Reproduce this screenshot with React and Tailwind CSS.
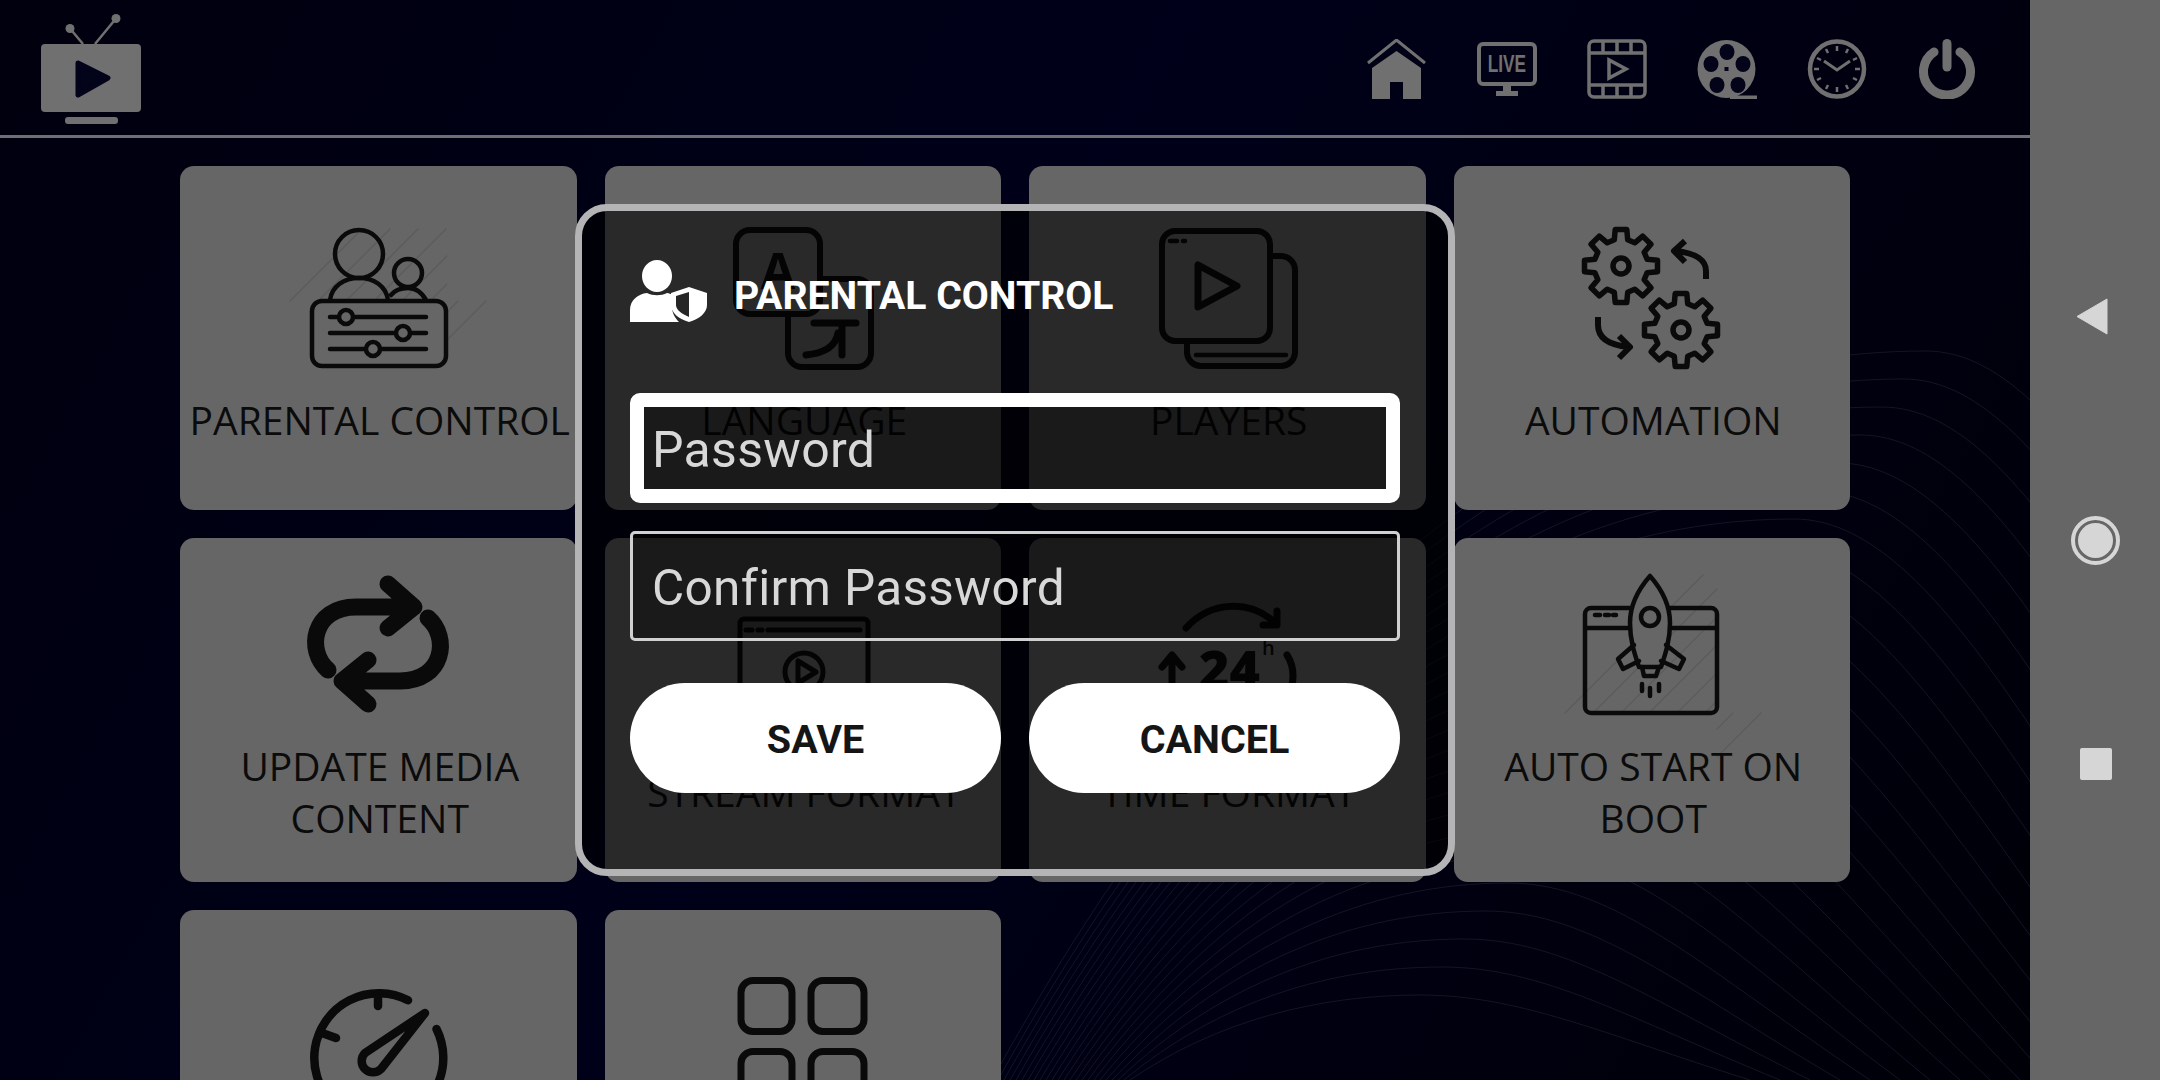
import React from 'react';

const gearPath = (cx, cy, outer, inner, teeth = 8) => {
    const pts = [];
    const step = (Math.PI * 2) / teeth;
    for (let i = 0; i < teeth; i++) {
        const a = i * step - Math.PI / 2;
        const w = step * 0.2;
        [[a - w, outer], [a + w, outer], [a + step * 0.32, inner], [a + step * 0.68, inner]].forEach(([t, r]) => {
            pts.push(`${(cx + Math.cos(t) * r).toFixed(1)} ${(cy + Math.sin(t) * r).toFixed(1)}`);
        });
    }
    return `M${pts.join('L')}Z`;
};

// faint hatching that sits behind two of the card icons
const Hatch = ({ x = 0, y = 0, w = 137, h = 138 }) => (
    <g stroke="#5c5c5c" strokeWidth="1.5">
        {[0, 1, 2, 3, 4, 5, 6, 7].map(i => (
            <line key={i} x1={x + i * 28 - 20} y1={y + h} x2={Math.min(x + w, x + i * 28 + h - 20)} y2={y + h - Math.min(h, w - i * 28 + 20)} />
        ))}
    </g>
);

const IconBox = ({ children }) => (
    <svg viewBox="0 0 140 140" className="w-[140px] h-[140px] shrink-0 overflow-visible" fill="none" stroke="#0a0a0a" strokeWidth="4.5" strokeLinecap="round" strokeLinejoin="round">
        {children}
    </svg>
);

const ParentalIcon = () => (
    <IconBox>
        <Hatch h={72} />
        <ellipse cx="49" cy="25" rx="24" ry="24" />
        <path d="M20 71C22 57 34 49 49 49S76 57 78 71" />
        <ellipse cx="98" cy="44" rx="14" ry="14" />
        <path d="M81 66C85 61 91 59 98 59S111 62 116 71" />
        <rect x="2" y="72" width="134" height="65" rx="10" />
        <path d="M20 88H116M20 104H116M20 120H116" />
        <circle cx="36" cy="88" r="7" fill="#666" />
        <circle cx="93" cy="104" r="7" fill="#666" />
        <circle cx="63" cy="120" r="7" fill="#666" />
    </IconBox>
);

const LanguageIcon = () => (
    <IconBox>
        <rect x="54" y="50" width="83" height="88" rx="14" strokeWidth="6" />
        <rect x="2" y="1" width="84" height="84" rx="14" fill="#666" strokeWidth="6" />
        <text x="44" y="60" textAnchor="middle" fill="#0a0a0a" stroke="none" fontSize="50" fontWeight="700" fontFamily="'Open Sans', sans-serif">A</text>
        <path d="M80 94H122M108 94V126M104 104C102 116 92 124 72 126" strokeWidth="7" />
    </IconBox>
);

const PlayersIcon = () => (
    <IconBox>
        <path d="M111 27H123A14 14 0 0 1 136 41V124A14 14 0 0 1 122 137H42A14 14 0 0 1 28 124V112" strokeWidth="6" />
        <rect x="3" y="2" width="108" height="110" rx="13" strokeWidth="6" />
        <path d="M39 36V78L78 57Z" strokeWidth="7" />
        <path d="M11 12H18M24 12H26M37 126H127" />
    </IconBox>
);

const AutomationIcon = () => (
    <IconBox>
        <path d={gearPath(38, 37, 37, 27)} strokeWidth="5.5" />
        <circle cx="38" cy="37" r="8" strokeWidth="5.5" />
        <path d={gearPath(98, 101, 37, 27)} strokeWidth="5.5" />
        <circle cx="98" cy="101" r="8" strokeWidth="5.5" />
        <path d="M123 50V42C123 32 114 24 92 22M102 12L91 22L102 33" strokeWidth="6" strokeLinecap="butt" />
        <path d="M15 88V96C15 108 24 116 46 118M36 107L47 118L36 129" strokeWidth="6" strokeLinecap="butt" />
    </IconBox>
);

const RefreshIcon = () => (
    <IconBox>
        <g strokeWidth="17">
            <path d="M18 95C-4 76 2 32 46 32H103M78 9L104 32L78 53" />
            <path d="M18 95C-4 76 2 32 46 32H103M78 9L104 32L78 53" transform="rotate(180 68 69)" />
        </g>
    </IconBox>
);

const StreamIcon = () => (
    <IconBox>
        <rect x="6" y="18" width="128" height="104" rx="4" strokeWidth="5" />
        <path d="M12 29H18M24 29H28M34 29H126" strokeWidth="5" />
        <circle cx="70" cy="71" r="19" strokeWidth="5" />
        <path d="M64 60V82L82 71Z" strokeWidth="5" />
    </IconBox>
);

const TimeIcon = () => (
    <IconBox>
        <path d="M27 27C52 -1 92 -1 116 22" strokeWidth="7" />
        <path d="M104 24H118V10" strokeWidth="7" />
        <path d="M13 96V56M3 66L13 54L23 66" strokeWidth="7" />
        <text x="40" y="87" fill="#0a0a0a" stroke="none" fontSize="52" fontWeight="800" fontFamily="'Open Sans', sans-serif">24</text>
        <text x="103" y="54" fill="#0a0a0a" stroke="none" fontSize="20" fontWeight="600" fontFamily="'Open Sans', sans-serif">h</text>
        <path d="M128 54C136 66 136 84 128 96" strokeWidth="7" />
    </IconBox>
);

const RocketIcon = () => (
    <IconBox>
        <Hatch x={2} y={0} w={132} h={138} />
        <path d="M47 33H8A6 6 0 0 0 2 39V132A6 6 0 0 0 8 138H128A6 6 0 0 0 134 132V39A6 6 0 0 0 128 33H87" fill="none" />
        <path d="M3 53H47M87 53H133M12 40H17M22 40H26M30 40H33" />
        <path d="M67 1C52 18 47 34 47 48C47 66 52 80 56 92H78C82 80 87 66 87 48C87 34 82 18 67 1Z" fill="#666" />
        <circle cx="67" cy="42" r="9" />
        <path d="M51 70L35 84L40 94L56 86M83 70L101 84L96 94L78 86" />
        <path d="M59 92L61 101H73L76 92" />
        <path d="M59 109V116M67 113V121M76 109V116" />
    </IconBox>
);

const GaugeIcon = () => (
    <IconBox>
        <g strokeWidth="8.5">
            <path d="M98 27.3A64.5 64.5 0 1 0 126.5 56" />
            <path d="M68 21V33M12 60L26 65" />
            <path d="M115 40L55 80A11 11 0 0 0 71 96Z" />
        </g>
    </IconBox>
);

const GridIcon = () => (
    <IconBox>
        <g strokeWidth="7">
            <rect x="7" y="7.5" width="51" height="51" rx="12" />
            <rect x="77" y="7.5" width="53" height="51" rx="12" />
            <rect x="7" y="78.5" width="51" height="55" rx="12" />
            <rect x="77" y="78.5" width="53" height="55" rx="12" />
        </g>
    </IconBox>
);

const cards = [
    { id: 'parental', label: 'PARENTAL CONTROL', Icon: ParentalIcon },
    { id: 'language', label: 'LANGUAGE', Icon: LanguageIcon },
    { id: 'players', label: 'PLAYERS', Icon: PlayersIcon },
    { id: 'automation', label: 'AUTOMATION', Icon: AutomationIcon },
    { id: 'update', label: 'UPDATE MEDIA CONTENT', Icon: RefreshIcon },
    { id: 'stream', label: 'STREAM FORMAT', Icon: StreamIcon },
    { id: 'time', label: 'TIME FORMAT', Icon: TimeIcon },
    { id: 'boot', label: 'AUTO START ON BOOT', Icon: RocketIcon },
    { id: 'gauge', label: '\u00a0', Icon: GaugeIcon },
    { id: 'grid', label: '\u00a0', Icon: GridIcon },
];

const Card = ({ label, Icon }) => (
    <div className="h-[344px] rounded-[14px] bg-[#666666] flex flex-col items-center justify-center pb-[2px] pl-[3px]">
        <Icon />
        <div className="mt-[25px] w-[390px] text-center font-['Open_Sans',sans-serif] text-[39px] leading-[52px] text-[#0b0b0b]">{label}</div>
    </div>
);

const Waves = () => {
    const lines = Array.from({ length: 24 }, (_, t) => {
        const py = 995 - 28 * t;
        const px = 1420 + 22 * t;
        const fx = 1130 - 6 * t;
        const rx = 1750 + 30 * t;
        return `M${fx} 1080C${fx + (px - fx) * 0.3} ${py + (1080 - py) * 0.3} ${px - (px - fx) * 0.35} ${py} ${px} ${py}C${px + (rx - px) * 0.3} ${py} ${rx - (rx - px) * 0.45} ${py + (1080 - py) * 0.45} ${rx} 1080`;
    });
    return (
        <svg viewBox="0 0 2030 1080" className="absolute inset-0 w-[2030px] h-[1080px]" fill="none" stroke="#141424" strokeWidth="1">
            {lines.map((d, i) => <path key={i} d={d} />)}
        </svg>
    );
};

const Logo = () => (
    <svg viewBox="0 0 100 106" className="w-[100px] h-[106px] overflow-visible">
        <path d="M29 10.5L42 26M75 0.5L54 26" stroke="#707070" strokeWidth="2.5" />
        <circle cx="29" cy="10.5" r="4.5" fill="#707070" />
        <circle cx="75" cy="0.5" r="4.5" fill="#707070" />
        <rect x="0" y="26" width="100" height="68" rx="4" fill="#707070" />
        <path d="M37 45L67 60L37 77Z" fill="#03031a" stroke="#03031a" strokeWidth="5" strokeLinejoin="round" />
        <rect x="24" y="99" width="53" height="7" rx="3" fill="#707070" />
    </svg>
);

const NavIcon = ({ children }) => (
    <svg viewBox="0 0 60 60" className="w-[60px] h-[60px]" fill="none" stroke="#707070" strokeWidth="3.5">
        {children}
    </svg>
);

const reelHoles = [[30, 13], [14, 25], [46, 25], [20, 46], [41, 46]];

const navIcons = [
    <NavIcon key="home">
        <path d="M1 24L29.5 1L58 24" strokeWidth="3" />
        <path d="M5 29L29.5 12L54 29V60H36V43H23V60H5Z" fill="#707070" stroke="none" />
    </NavIcon>,
    <NavIcon key="live">
        <rect x="2" y="5" width="56" height="40" rx="4" strokeWidth="4" />
        <text x="41.6" y="33" transform="scale(0.72 1)" textAnchor="middle" fill="#707070" stroke="none" fontSize="24" fontWeight="700" fontFamily="'Liberation Sans', sans-serif">LIVE</text>
        <path d="M26 46V52H19V57H41V52H34V46Z" fill="#707070" stroke="none" />
    </NavIcon>,
    <NavIcon key="film">
        <rect x="2" y="2" width="56" height="56" rx="5" strokeWidth="3.5" />
        <path d="M2 14H58M2 46H58M16 2V14M30 2V14M44 2V14M16 46V58M30 46V58M44 46V58" />
        <path d="M22 21V39L39 30Z" strokeWidth="3.5" />
    </NavIcon>,
    <NavIcon key="reel">
        <path d="M33 58.5H60" strokeWidth="4" />
        <circle cx="29.5" cy="30" r="29" fill="#707070" stroke="none" />
        {reelHoles.map(([x, y]) => <ellipse key={x} cx={x} cy={y} rx="7.5" ry="8" fill="#03031a" stroke="none" />)}
        <rect x="27.5" y="28" width="4" height="4" fill="#03031a" stroke="none" />
    </NavIcon>,
    <NavIcon key="clock">
        <ellipse cx="30" cy="30" rx="27" ry="27.5" strokeWidth="4.5" />
        <path d="M30 7V12M30 48V53M7 30H12M48 30H53M19 10L21 14M41 10L39 14M10 19L14 21M50 19L46 21M10 41L14 39M50 41L46 39M19 50L21 46M41 50L39 46" strokeWidth="2.5" />
        <path d="M17 22L30 31L43 22" strokeWidth="3" />
    </NavIcon>,
    <NavIcon key="power">
        <path d="M30 4.5V28" strokeWidth="9" strokeLinecap="round" />
        <path d="M17 13A23.5 23.5 0 1 0 43 13" strokeWidth="9" strokeLinecap="round" />
    </NavIcon>,
];

const ShieldUserIcon = () => (
    <svg viewBox="0 0 78 62" className="w-[78px] h-[62px] shrink-0">
        <ellipse cx="27" cy="16" rx="15" ry="16" fill="#fff" />
        <path d="M0 62V50C0 40 8 34 17 33C23 36 31 36 37 33C39 33 41 34 42 35V47C42 53 45 58 49 62H2Z" fill="#fff" />
        <path d="M59 27L77 33V45C77 53 69 59 59 62C49 59 41 53 41 45V33Z" fill="#fff" />
        <path d="M59 32L46 36V45C46 50 52 54 59 57Z" fill="#262626" />
    </svg>
);

const ParentalModal = () => (
    <div className="absolute left-[575px] top-[204px] w-[880px] h-[672px] rounded-[32px] border-[7px] border-[#b4b4b6] bg-black/60 px-[48px] pt-[49px] font-['Roboto',sans-serif]">
        <div className="h-[62px] flex items-center gap-[26px]">
            <ShieldUserIcon />
            <h2 className="mt-[10px] text-[39.2px] font-bold text-white">PARENTAL CONTROL</h2>
        </div>
        <input type="password" placeholder="Password" className="mt-[71px] block w-full h-[110px] rounded-[10px] border-[14px] border-white bg-black/35 pl-[8px] pt-[3px] text-[50px] tracking-[0.3px] outline-none placeholder:text-[#d8d8d8]" />
        <input type="password" placeholder="Confirm Password" className="mt-[28px] block w-full h-[110px] rounded-[5px] border-[3px] border-[#d0d0d0] bg-black/35 pl-[19px] pt-[4px] text-[49.5px] tracking-[0.3px] outline-none placeholder:text-[#d8d8d8]" />
        <div className="mt-[42px] flex gap-[28px]">
            <button className="flex-1 h-[110px] rounded-full bg-white pt-[3px] text-[39.5px] font-bold text-[#151515]">SAVE</button>
            <button className="flex-1 h-[110px] rounded-full bg-white pt-[3px] text-[39.5px] font-bold text-[#151515]">CANCEL</button>
        </div>
    </div>
);

export default function App() {
    return (
        <div className="w-[2160px] h-[1080px] flex overflow-hidden">
            <main className="relative w-[2030px] h-[1080px] overflow-hidden bg-[linear-gradient(120deg,#00000f_0%,#00001a_45%,#000008_100%)]">
                <Waves />
                <div className="relative">
                    <header className="h-[138px] border-b-[3px] border-[#6e6e73] flex items-center justify-between pl-[41px] pr-[53px]">
                        <div className="mt-[6px]"><Logo /></div>
                        <nav className="flex items-center gap-[50px] pt-[3px]">{navIcons}</nav>
                    </header>
                    <div className="pt-[28px] pl-[180px] grid grid-cols-[repeat(4,396.5px)] gap-[28px]">
                        {cards.map(c => <Card key={c.id} label={c.label} Icon={c.Icon} />)}
                    </div>
                </div>
                <ParentalModal />
            </main>
            <aside className="w-[130px] h-[1080px] bg-[#666666] relative">
                <svg viewBox="0 0 32 37" className="absolute left-[46px] top-[298px] w-[32px] h-[37px]">
                    <path d="M31 1V36L1 18.5Z" fill="#d6d6d6" stroke="#d6d6d6" strokeLinejoin="round" />
                </svg>
                <div className="absolute left-[41px] top-[516px] w-[49px] h-[49px] rounded-full border-[4px] border-[#d6d6d6] p-[3px]">
                    <div className="w-full h-full rounded-full bg-[#d6d6d6]" />
                </div>
                <div className="absolute left-[50px] top-[748px] w-[32px] h-[32px] rounded-[2px] bg-[#d6d6d6]" />
            </aside>
        </div>
    );
}
